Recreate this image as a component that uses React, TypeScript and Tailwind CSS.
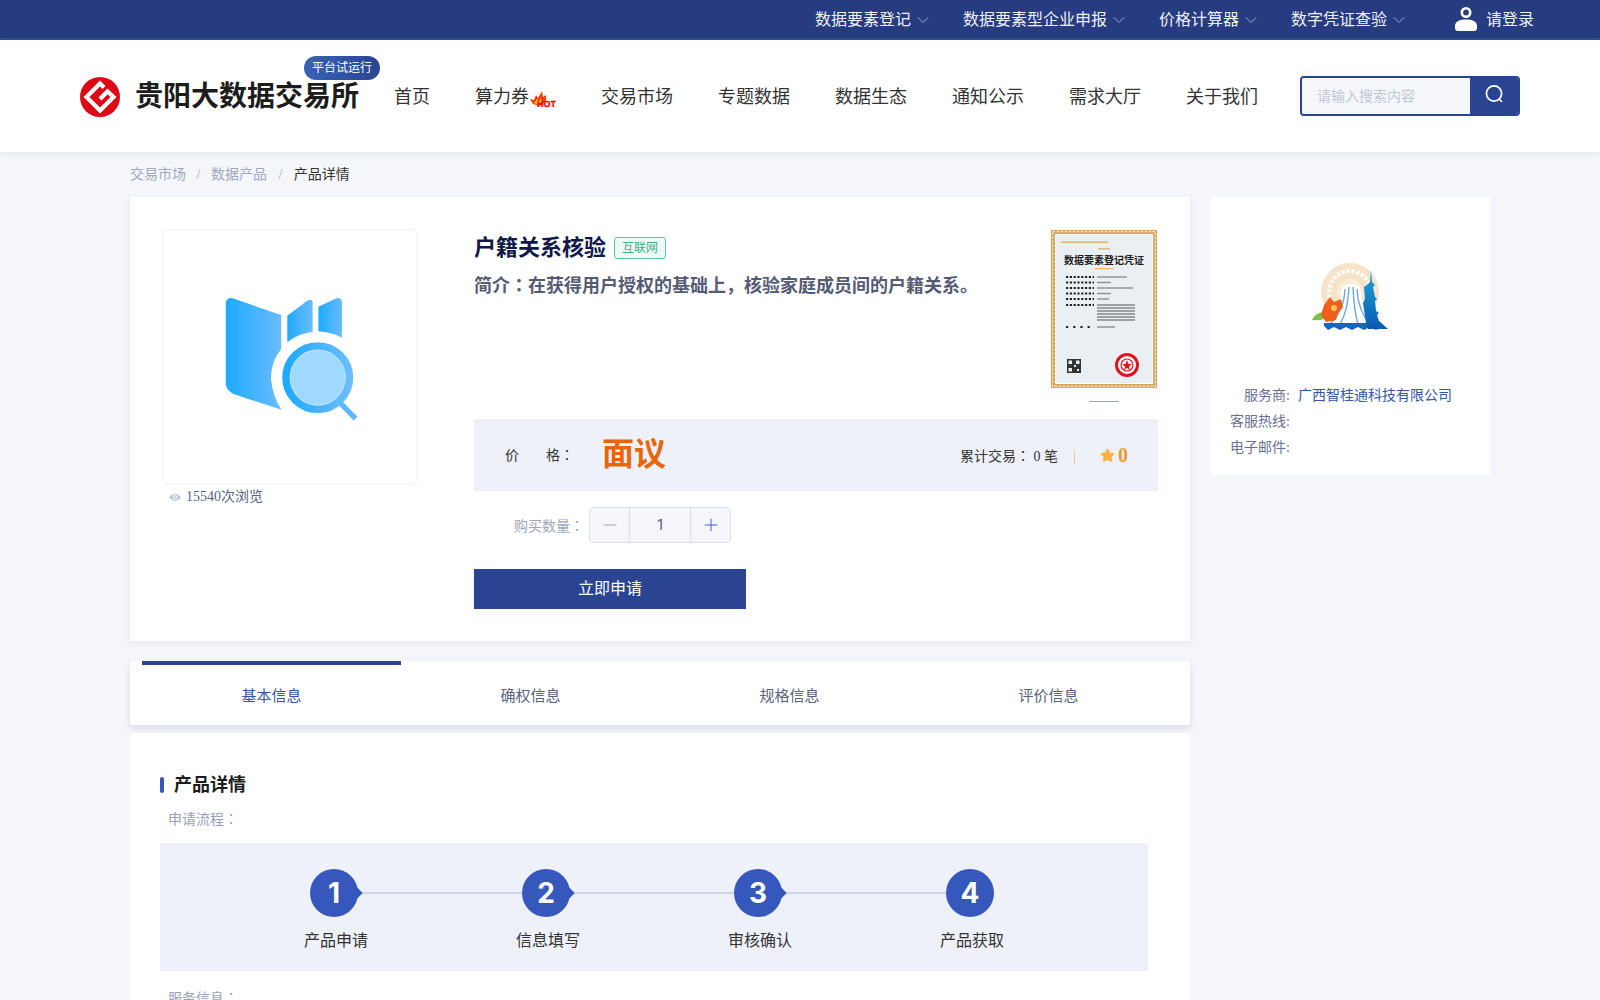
import { ChevronDown, Minus, Plus, Star } from "lucide-react";

const topLinks = ["数据要素登记", "数据要素型企业申报", "价格计算器", "数字凭证查验"];
const navLinks = ["首页", "算力券", "交易市场", "专题数据", "数据生态", "通知公示", "需求大厅", "关于我们"];
const tabs = ["基本信息", "确权信息", "规格信息", "评价信息"];
const steps = ["产品申请", "信息填写", "审核确认", "产品获取"];
const certRows = [
  { y: 47, w: 30 },
  { y: 52.5, w: 14 },
  { y: 58, w: 36 },
  { y: 63.5, w: 14 },
  { y: 69, w: 12 },
];
const certLines = [75, 78, 81, 84, 87, 90];

// 전각 콜론은 TC 글꼴이라야 가운데에 놓인다
function Colon() {
  return <span className="font-['Noto_Sans_CJK_TC',sans-serif]">：</span>;
}

function BrandLogo() {
  return (
    <svg viewBox="0 0 40 40" className="h-10 w-10 shrink-0">
      <circle cx="20" cy="20" r="20" fill="#dc0a14" />
      <path
        d="M24 10.5 L20 6.5 L6.5 20 L20 33.5 L33.5 20 L27.5 14.5 L20 22"
        fill="none"
        stroke="#fff"
        strokeWidth="4.2"
      />
    </svg>
  );
}

function HotMark() {
  return (
    <svg viewBox="0 0 26 16" className="h-4 w-[26px] shrink-0">
      <path d="M0 8 L4 9 L6 4 L8 7 L12 0 L13 6 L16 4 L16 10 L10 15 L3 13 Z" fill="#ff3c00" />
      <path d="M4 12 L7 8 L9 10 L11 7 L12 11 L9 14 Z" fill="#ffc000" />
      <text
        x="7"
        y="15.5"
        textLength="19"
        fontFamily="Liberation Sans, sans-serif"
        fontWeight="700"
        fontSize="9"
        fill="#f00000"
        stroke="#f00000"
        strokeWidth="0.3"
      >
        HOT
      </text>
    </svg>
  );
}

function UserIcon() {
  return (
    <svg viewBox="0 0 22 24" className="h-6 w-[22px]" fill="#fff">
      <circle cx="11" cy="5.5" r="4.2" fill="none" stroke="#fff" strokeWidth="2.6" />
      <path d="M0 19 C0 14 5 12.5 11 12.5 C17 12.5 22 14 22 19 V21 Q22 24 19 24 H3 Q0 24 0 21 Z" />
    </svg>
  );
}

function SearchGlyph() {
  return (
    <svg viewBox="0 0 20 20" className="h-5 w-5" fill="none" stroke="#fff" strokeWidth="1.7">
      <circle cx="10" cy="9.5" r="7.6" />
      <line x1="15" y1="15" x2="18" y2="18" />
    </svg>
  );
}

function ProductIcon() {
  return (
    <svg viewBox="205 201 426 426" className="h-36 w-36">
      <defs>
        <linearGradient id="pageFill" x1="0" x2="1" y1="0" y2="0">
          <stop offset="0" stopColor="#1eaaff" />
          <stop offset="1" stopColor="#6bbcff" />
        </linearGradient>
      </defs>
      <path d="M228 252 Q232 238 248 240 L392 290 L392 390 Q360 430 362 480 Q366 530 393 570 L255 525 Q232 515 228 495 Z" fill="url(#pageFill)" />
      <path d="M410 292 L470 247 Q485 240 485 255 L485 340 Q440 345 410 370 Z" fill="url(#pageFill)" />
      <path d="M502 265 L555 240 Q572 238 572 255 L572 357 Q540 340 502 338 Z" fill="url(#pageFill)" />
      <line x1="565" y1="548" x2="612" y2="596" stroke="#5db8ff" strokeWidth="16" />
      <circle cx="500" cy="475" r="94" fill="#a0d9ff" stroke="url(#pageFill)" strokeWidth="22" />
      <circle cx="500" cy="475" r="81" fill="none" stroke="#b8e2ff" strokeWidth="3" />
    </svg>
  );
}

function Certificate() {
  return (
    <svg viewBox="0 0 106 158" className="h-[158px] w-[106px]">
      <rect width="106" height="158" fill="#d8a862" />
      <rect x="1.6" y="1.6" width="102.8" height="154.8" fill="none" stroke="#f6e8c8" strokeWidth="1.2" strokeDasharray="2.4 1.6" />
      <rect x="4" y="4" width="98" height="150" fill="#fff" />
      <rect x="5" y="5" width="96" height="148" fill="#e9eff2" />
      <rect x="10" y="11.5" width="47" height="1.4" fill="#d9b066" strokeDasharray="2 1" />
      <rect x="47" y="18" width="12" height="1.6" fill="#d9bd84" />
      <text x="53" y="34" textAnchor="middle" fontSize="10" fontWeight="700" fill="#1c1c1c" fontFamily="Noto Sans CJK SC, sans-serif">
        数据要素登记凭证
      </text>
      <rect x="43" y="38" width="20" height="1.2" fill="#d9bd84" />
      {certRows.map((row) => (
        <g key={row.y}>
          <line x1="15" x2="43" y1={row.y} y2={row.y} stroke="#222" strokeWidth="2.2" strokeDasharray="2.2 1.6" />
          <rect x="46" y={row.y - 0.7} width={row.w} height="1.4" fill="#8a8f96" />
        </g>
      ))}
      <line x1="15" x2="43" y1="75" y2="75" stroke="#222" strokeWidth="2.2" strokeDasharray="2.2 1.6" />
      {certLines.map((y) => (
        <rect key={y} x="46" y={y - 0.5} width="38" height="1" fill="#555" />
      ))}
      <line x1="15" x2="43" y1="97" y2="97" stroke="#222" strokeWidth="2.2" strokeDasharray="2.2 5" />
      <rect x="46" y="96.3" width="18" height="1.4" fill="#8a8f96" />
      <rect x="16" y="129" width="14" height="14" fill="#333" />
      <rect x="17.5" y="130.5" width="3.5" height="3.5" fill="#e9eff2" />
      <rect x="25" y="130.5" width="3.5" height="3.5" fill="#e9eff2" />
      <rect x="17.5" y="138" width="3.5" height="3.5" fill="#e9eff2" />
      <rect x="23" y="135" width="2" height="2" fill="#e9eff2" />
      <rect x="26" y="139" width="2" height="2" fill="#e9eff2" />
      <circle cx="76" cy="135" r="10.5" fill="#fff" stroke="#e0141e" strokeWidth="3" />
      <circle cx="76" cy="135" r="6" fill="none" stroke="#e0141e" strokeWidth="1.2" />
      <path d="M76 130 L77.5 134 L81 134 L78 136.5 L79 140 L76 138 L73 140 L74 136.5 L71 134 L74.5 134 Z" fill="#e0141e" />
    </svg>
  );
}

function ProviderLogo() {
  return (
    <svg viewBox="0 0 76 68" className="h-[68px] w-[76px]">
      <defs>
        <linearGradient id="towerFill" x1="0" x2="0" y1="0" y2="1">
          <stop offset="0" stopColor="#18a8dc" />
          <stop offset="1" stopColor="#0c58b4" />
        </linearGradient>
      </defs>
      <circle cx="38" cy="29" r="29" fill="#f7e4c8" />
      <circle cx="38" cy="29" r="21" fill="none" stroke="#fff" strokeWidth="4" strokeDasharray="3 2" />
      <circle cx="38" cy="29" r="13" fill="#f9edd9" />
      <path d="M30 24 Q39 18 48 24 Q50 48 66 62 H12 Q28 48 30 24 Z" fill="#fff" />
      <path
        d="M33 26 Q32 48 18 61 M37 24 Q36 48 28 61 M41 24 Q42 48 46 61 M45 26 Q46 48 58 61"
        stroke="#6fa8e0"
        strokeWidth="1.4"
        fill="none"
      />
      <path d="M12 60 H70 V64 L64 67 L58 64 L52 67 L46 64 L40 67 L34 64 L28 67 L22 64 L16 67 L12 63 Z" fill="#1466c0" />
      <path
        d="M59 7 L60 19 L63 22 L61 24 L63 34 L65 36 L63 38 L64 48 L67 50 L65 52 L67 58 L76 66 L56 66 L54 60 L51 40 L53 36 L52 24 L55 22 L58 19 Z"
        fill="url(#towerFill)"
      />
      <path d="M0 57 Q3 50 11 49 L12 56 Q6 58 0 57 Z" fill="#7cc23a" />
      <path d="M12 42 L18 34 L22 39 L29 36 L31 44 L26 50 L24 57 L14 59 L9 52 Z" fill="#f0601a" />
      <circle cx="22" cy="45" r="3" fill="#ffc460" />
    </svg>
  );
}

function StepBubble({ n, pointed }: { n: number; pointed: boolean }) {
  return (
    <div className="relative flex h-12 w-12 shrink-0 items-center justify-center rounded-full bg-[#3658bc] font-['Inter',sans-serif] text-[28px] font-bold text-white">
      {n}
      {pointed && <span className="absolute left-[43px] top-[20px] h-2 w-2 rotate-45 bg-[#3658bc]" />}
    </div>
  );
}

export default function App() {
  return (
    <div className="h-[1000px] overflow-hidden bg-[#f5f6fa] font-['Liberation_Serif','Noto_Sans_CJK_SC',serif] text-sm text-[#333]">
      <div className="flex h-10 items-center justify-end border-b-2 border-[#27568a] bg-[#263b80] pr-[66px] pt-[2px] text-base text-[#eef1f8]">
        {topLinks.map((item) => (
          <div key={item} className="mr-[30px] flex items-center gap-[2px]">
            <span>{item}</span>
            <ChevronDown className="h-5 w-5 text-[#a9b4d4]" strokeWidth={1.1} />
          </div>
        ))}
        <div className="ml-4 flex items-center gap-[9px]">
          <div className="-mt-[2px]">
            <UserIcon />
          </div>
          <span>请登录</span>
        </div>
      </div>

      <header className="flex h-[112px] items-center bg-white pl-[80px] pt-[2px] shadow-[0_2px_6px_rgba(40,50,100,0.08)]">
        <BrandLogo />
        <div className="relative ml-[15px] text-[28px] font-bold leading-10 text-[#1c1c1c]">
          贵阳大数据交易所
          <span className="absolute left-[169px] top-[-21px] flex h-6 w-[76px] items-center justify-center rounded-full bg-gradient-to-r from-[#3a62b4] to-[#2a4492] text-xs font-normal text-white">
            平台试运行
          </span>
        </div>
        <nav className="ml-[35px] flex items-center gap-[45px] text-lg text-[#333]">
          {navLinks.map((item) =>
            item === "算力券" ? (
              <div key={item} className="flex w-[81px] items-center gap-px">
                <span>{item}</span>
                <div className="mt-[3px]">
                  <HotMark />
                </div>
              </div>
            ) : (
              <span key={item}>{item}</span>
            ),
          )}
        </nav>
        <div className="-mt-[2px] ml-[42px] flex h-10 w-[220px] overflow-hidden rounded border-2 border-[#2a4492]">
          <div className="flex flex-1 items-center bg-[#f5f6fa] pl-[15px] pt-[2px] text-sm text-[#c2c6d4]">请输入搜索内容</div>
          <div className="flex w-[48px] items-center justify-center bg-[#2a4492] pb-1">
            <SearchGlyph />
          </div>
        </div>
      </header>

      <div className="ml-[130px] flex h-[45px] items-center text-[#a0a8c2]">
        <span>交易市场</span>
        <span className="mx-[10.5px]">/</span>
        <span>数据产品</span>
        <span className="mx-[11.5px]">/</span>
        <span className="text-[#333]">产品详情</span>
      </div>

      <div className="ml-[130px] flex gap-5">
        <main className="w-[1060px] shrink-0">
          <section className="flex bg-white p-8 shadow-[0_2px_6px_rgba(40,50,100,0.08)]">
            <div className="w-[256px] shrink-0">
              <div className="flex h-[256px] items-center justify-center rounded-md border-2 border-[#f6f7fb]">
                <ProductIcon />
              </div>
              <div className="mt-[2px] flex items-center gap-[5px] pl-[7px] text-[#5a6280]">
                <svg viewBox="0 0 14 10" className="h-[9px] w-3">
                  <path d="M0 5 Q7 -3 14 5 Q7 13 0 5 Z" fill="#c2c6d4" />
                  <circle cx="7" cy="5" r="2.6" fill="#fff" />
                  <circle cx="7" cy="5" r="1.6" fill="#c2c6d4" />
                </svg>
                <span>15540次浏览</span>
              </div>
            </div>

            <div className="ml-[56px] flex-1">
              <div className="flex h-[190px] justify-between pr-px">
                <div>
                  <div className="mt-[3px] flex items-center">
                    <h1 className="text-[22px] font-bold leading-8 text-[#10184a]">户籍关系核验</h1>
                    <span className="ml-2 flex h-[22px] w-[52px] items-center justify-center rounded-[3px] border border-[#5cc4a6] bg-[#eefaf6] text-xs text-[#3bb08f]">
                      互联网
                    </span>
                  </div>
                  <p className="mt-[6px] text-lg font-bold leading-7 text-[#555b75]">
                    简介
                    <Colon />
                    在获得用户授权的基础上，核验家庭成员间的户籍关系。
                  </p>
                </div>
                <div className="flex flex-col items-center pt-px">
                  <Certificate />
                  <span className="mt-[13px] h-px w-[30px] bg-[#a0a8c2]" />
                </div>
              </div>

              <div className="flex h-[72px] items-center bg-[#eef1fa] pl-[31px] pr-[30px]">
                <span className="flex w-[69px] items-baseline justify-between leading-5">
                  <span>价</span>
                  <span>
                    格
                    <Colon />
                  </span>
                </span>
                <span className="ml-[28px] text-[32px] font-bold text-[#e8650a]">面议</span>
                <span className="ml-auto pt-[2px]">
                  累计交易
                  <Colon /> 0 笔
                </span>
                <span className="ml-4 mr-[25px] mt-1 h-[14px] w-px bg-[#f0c890]" />
                <Star className="h-[15px] w-[15px] fill-[#ffb246] text-[#ffb246]" />
                <span className="ml-[3px] text-xl font-bold text-[#e89a32]">0</span>
              </div>

              <div className="mt-4 flex items-center pl-10">
                <span className="w-[75px] pt-[2px] text-[#a0a5b8]">
                  购买数量
                  <Colon />
                </span>
                <div className="flex h-9 w-[142px] items-stretch rounded border border-[#dcdfe8] bg-[#f5f6fa]">
                  <div className="flex w-10 items-center justify-center border-r border-[#dcdfe8]">
                    <Minus className="h-5 w-5 text-[#a0a5b8]" strokeWidth={1.2} />
                  </div>
                  <div className="flex flex-1 items-center justify-center font-['Inter',sans-serif] text-[#555b75]">1</div>
                  <div className="flex w-10 items-center justify-center border-l border-[#dcdfe8]">
                    <Plus className="h-5 w-5 text-[#4060d8]" strokeWidth={1.2} />
                  </div>
                </div>
              </div>

              <button className="mt-[26px] flex h-10 w-[272px] items-center justify-center bg-[#2a4492] text-base text-white">
                立即申请
              </button>
            </div>
          </section>

          <div className="mt-5 flex h-16 bg-white px-3 shadow-[0_4px_8px_rgba(40,50,100,0.12)]">
            {tabs.map((tab, i) => (
              <div
                key={tab}
                className={
                  i === 0
                    ? "flex flex-1 items-center justify-center border-t-4 border-[#2a4492] pt-1 text-[15px] text-[#3a55a8]"
                    : "flex flex-1 items-center justify-center border-t-4 border-transparent pt-1 text-[15px] text-[#5a6280]"
                }
              >
                {tab}
              </div>
            ))}
          </div>

          <section className="mt-2 h-[400px] bg-white px-[30px] pt-[40px]">
            <div className="flex items-center gap-[10px]">
              <span className="h-4 w-1 rounded-sm bg-[#3658bc]" />
              <h2 className="text-lg font-bold leading-6 text-[#1c1c1c]">产品详情</h2>
            </div>
            <p className="mt-[10px] pl-2 leading-[22px] text-[#9aa0b5]">
              申请流程
              <Colon />
            </p>
            <div className="mt-3 h-[128px] w-[988px] bg-[#eef1fa] pl-[150px] pt-[26px]">
              <div className="flex">
                {steps.map((step, i) => (
                  <div key={step} className={i < 3 ? "flex w-[212px] flex-col" : "flex w-12 flex-col"}>
                    <div className="flex items-center">
                      <StepBubble n={i + 1} pointed={i < 3} />
                      {i < 3 && <span className="h-0.5 flex-1 bg-[#ced6ee]" />}
                    </div>
                    <span className="mt-[14px] w-16 -translate-x-[6px] whitespace-nowrap text-base leading-5 text-[#333]">{step}</span>
                  </div>
                ))}
              </div>
            </div>
            <p className="mt-4 pl-2 text-[#9aa0b5]">
              服务信息
              <Colon />
            </p>
          </section>
        </main>

        <aside className="h-[278px] w-[280px] shrink-0 bg-white pt-[66px]">
          <div className="flex justify-center">
            <ProviderLogo />
          </div>
          <dl className="mt-[52px] leading-[26px] text-[#6a7190]">
            <div className="flex">
              <dt className="w-[80px] text-right">服务商:</dt>
              <dd className="ml-2 text-[#3a55a8]">广西智桂通科技有限公司</dd>
            </div>
            <div className="flex">
              <dt className="w-[80px] text-right">客服热线:</dt>
            </div>
            <div className="flex">
              <dt className="w-[80px] text-right">电子邮件:</dt>
            </div>
          </dl>
        </aside>
      </div>
    </div>
  );
}
